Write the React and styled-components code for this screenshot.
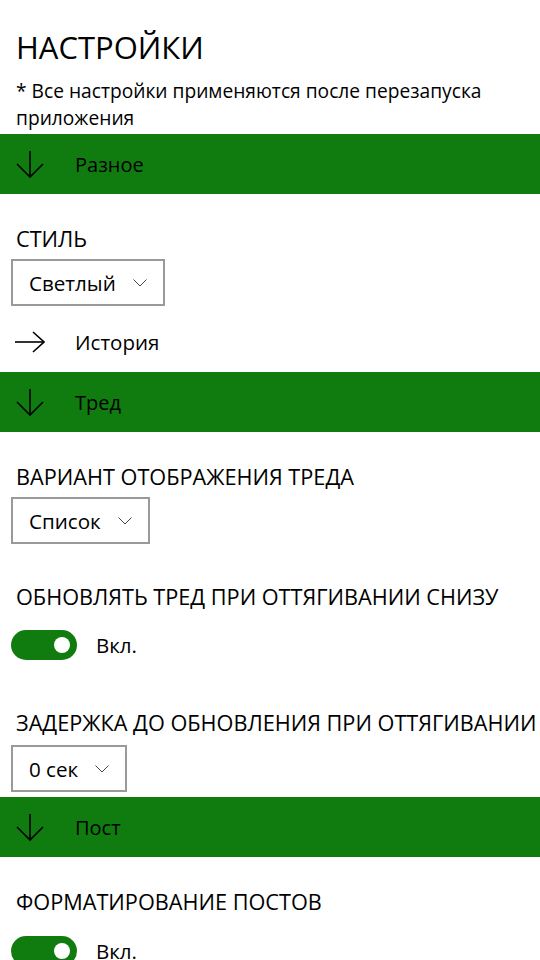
import React from 'react';
import styled, { createGlobalStyle } from 'styled-components';

const GlobalStyle = createGlobalStyle`
  html, body {
    margin: 0;
    padding: 0;
    background: #ffffff;
  }
  body {
    font-family: 'Open Sans', 'Noto Sans', sans-serif;
    color: #000000;
  }
`;

const Page = styled.div`
  width: 540px;
  height: 960px;
  overflow: hidden;
  display: flex;
  flex-direction: column;
  padding-top: 27px;
  box-sizing: border-box;
`;

const Title = styled.h1`
  margin: 0 0 0 16px;
  font-size: 31px;
  line-height: 40px;
  font-weight: 400;
`;

const Note = styled.p`
  margin: 10px 16px 3px 16px;
  font-size: 19.2px;
  line-height: 27px;
`;

const SectionBar = styled.div`
  height: 60px;
  flex-shrink: 0;
  margin-top: ${(p) => p.$top || 0}px;
  background: #107c10;
  display: flex;
  align-items: center;
  padding-left: 16px;
  gap: 31px;
  font-size: 20px;
`;

const LinkRow = styled.div`
  height: 60px;
  flex-shrink: 0;
  margin-top: ${(p) => p.$top || 0}px;
  display: flex;
  align-items: center;
  padding-left: 15px;
  gap: 30px;
  font-size: 20.5px;
`;

const Field = styled.div`
  display: flex;
  flex-direction: column;
  align-items: flex-start;
  margin-top: ${(p) => p.$top}px;
  padding-left: 11px;
  gap: ${(p) => p.$gap}px;
`;

const Label = styled.div`
  padding-left: 5px;
  font-size: 21.7px;
  line-height: 28px;
  white-space: nowrap;
  text-transform: uppercase;
`;

const Dropdown = styled.div`
  height: 47px;
  box-sizing: border-box;
  border: 2px solid #9a9a9a;
  display: inline-flex;
  align-items: center;
  gap: 17px;
  padding: 0 16px 0 16px;
  font-size: 20.6px;
`;

const ToggleRow = styled.div`
  display: flex;
  align-items: center;
  gap: 19px;
  font-size: 20.5px;
`;

const Track = styled.div`
  width: 66px;
  height: 30px;
  border-radius: 15px;
  background: ${(p) => (p.$on ? '#107c10' : '#ffffff')};
  position: relative;
  flex-shrink: 0;
`;

const Knob = styled.span`
  position: absolute;
  top: 7px;
  right: 7px;
  width: 16px;
  height: 16px;
  border-radius: 50%;
  background: #ffffff;
`;

const ArrowDown = () => (
  <svg width="28" height="28" viewBox="0 0 28 28" fill="none" stroke="#000" strokeWidth="1.6">
    <line x1="14" y1="1" x2="14" y2="27" />
    <polyline points="1,14 14,27 27,14" />
  </svg>
);

const ArrowRight = () => (
  <svg width="30" height="28" viewBox="0 0 30 28" fill="none" stroke="#000" strokeWidth="1.6">
    <line x1="0" y1="14" x2="29" y2="14" />
    <polyline points="18,4 29,14 18,24" />
  </svg>
);

const Chevron = () => (
  <svg width="14" height="8" viewBox="0 0 14 8" fill="none" stroke="#444" strokeWidth="1">
    <polyline points="0.5,0.5 7,7 13.5,0.5" />
  </svg>
);

function Select({ value }) {
  return (
    <Dropdown>
      <span>{value}</span>
      <Chevron />
    </Dropdown>
  );
}

function Toggle({ on }) {
  return (
    <ToggleRow>
      <Track $on={on}>
        <Knob />
      </Track>
      <span>{on ? 'Вкл.' : 'Выкл.'}</span>
    </ToggleRow>
  );
}

export default function App() {
  return (
    <>
      <GlobalStyle />
      <Page>
        <Title>НАСТРОЙКИ</Title>
        <Note>* Все настройки применяются после перезапуска приложения</Note>

        <SectionBar>
          <ArrowDown />
          <span>Разное</span>
        </SectionBar>
        <Field $top={31} $gap={6}>
          <Label>Стиль</Label>
          <Select value="Светлый" />
        </Field>
        <LinkRow $top={6}>
          <ArrowRight />
          <span>История</span>
        </LinkRow>

        <SectionBar>
          <ArrowDown />
          <span>Тред</span>
        </SectionBar>
        <Field $top={31} $gap={6}>
          <Label>Вариант отображения треда</Label>
          <Select value="Список" />
        </Field>
        <Field $top={39} $gap={19}>
          <Label>Обновлять тред при оттягивании снизу</Label>
          <Toggle on />
        </Field>
        <Field $top={49} $gap={8}>
          <Label>Задержка до обновления при оттягивании</Label>
          <Select value="0 сек" />
        </Field>

        <SectionBar $top={5}>
          <ArrowDown />
          <span>Пост</span>
        </SectionBar>
        <Field $top={31} $gap={20}>
          <Label>Форматирование постов</Label>
          <Toggle on />
        </Field>
      </Page>
    </>
  );
}
